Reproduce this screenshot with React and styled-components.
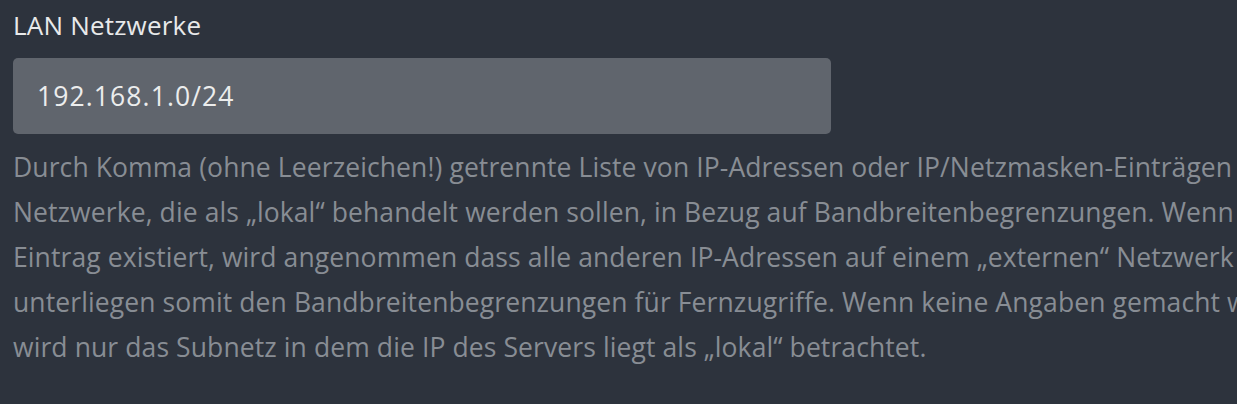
import React from 'react';
import styled, { createGlobalStyle } from 'styled-components';

const GlobalStyle = createGlobalStyle`
  html, body {
    margin: 0;
    padding: 0;
    background: #2d333d;
    overflow: hidden;
  }
  body {
    font-family: "Open Sans", "Noto Sans", sans-serif;
  }
`;

const Page = styled.div`
  width: 1237px;
  height: 404px;
  padding: 10px 13px 0;
  box-sizing: border-box;
  overflow: hidden;
`;

const Label = styled.label`
  display: block;
  color: #e8e9ea;
  font-size: 26px;
  line-height: 30px;
  letter-spacing: 0.2px;
  margin-bottom: 18px;
`;

const Input = styled.input`
  display: block;
  width: 818px;
  height: 76px;
  box-sizing: border-box;
  padding: 0 24px;
  border: none;
  border-radius: 5px;
  background: #60656d;
  color: #eceded;
  font-family: inherit;
  font-size: 26.5px;
  letter-spacing: 1.1px;
  outline: none;
`;

const Help = styled.p`
  margin: 11px 0 0;
  color: #888d94;
  font-size: 26.5px;
  line-height: 45px;
  letter-spacing: 0.1px;
  white-space: nowrap;
`;

export default function App() {
  return (
    <>
      <GlobalStyle />
      <Page>
        <Label htmlFor="lan">LAN Netzwerke</Label>
        <Input id="lan" defaultValue="192.168.1.0/24" />
        <Help>
          Durch Komma (ohne Leerzeichen!) getrennte Liste von IP-Adressen oder IP/Netzmasken-Einträgen (für
          <br />
          Netzwerke, die als „lokal“ behandelt werden sollen, in Bezug auf Bandbreitenbegrenzungen. Wenn kein
          <br />
          Eintrag existiert, wird angenommen dass alle anderen IP-Adressen auf einem „externen“ Netzwerk sind und
          <br />
          unterliegen somit den Bandbreitenbegrenzungen für Fernzugriffe. Wenn keine Angaben gemacht werden,
          <br />
          wird nur das Subnetz in dem die IP des Servers liegt als „lokal“ betrachtet.
        </Help>
      </Page>
    </>
  );
}
